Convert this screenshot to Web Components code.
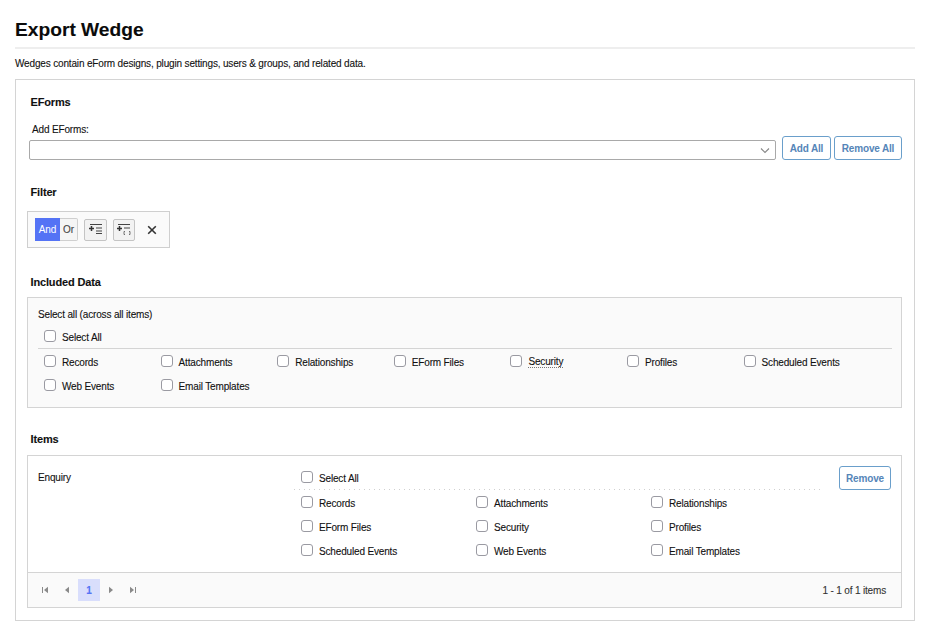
<!DOCTYPE html>
<html>
<head>
<meta charset="utf-8">
<title>Export Wedge</title>
<style>
  html, body { margin: 0; background: #fff; }
  body { font: 10px "Liberation Sans", Arial, sans-serif; letter-spacing: -0.16px; color: #111; -webkit-text-stroke: 0.1px currentColor; }
</style>
</head>
<body>
<wedge-page>
  <span slot="title">Export Wedge</span>
  <span slot="intro">Wedges contain eForm designs, plugin settings, users &amp; groups, and related data.</span>

  <section-title style="height:41px">EForms</section-title>
  <eform-picker></eform-picker>

  <section-title style="height:26px;margin-top:25px">Filter</section-title>
  <filter-bar></filter-bar>

  <section-title style="height:22px;margin-top:27px">Included Data</section-title>
  <included-data></included-data>

  <section-title style="height:23px;margin-top:24px">Items</section-title>
  <item-list></item-list>
</wedge-page>

<script>
// shared check list, same order everywhere
const DATA_TYPES = ['Records', 'Attachments', 'Relationships', 'EForm Files', 'Security', 'Profiles', 'Scheduled Events', 'Web Events', 'Email Templates'];

class WedgePage extends HTMLElement {
  constructor() {
    super();
    this.attachShadow({ mode: 'open' });
    this.shadowRoot.innerHTML = `
      <style>
        :host { display: block; width: 900px; padding: 0 15px; }
        h1 { margin: 0; height: 49px; box-sizing: border-box; padding-top: 18px; font: bold 19.2px/24px "Liberation Sans", Arial, sans-serif; letter-spacing: 0; color: #0b0b0b; border-bottom: 2px solid #eee; }
        p { margin: 0; height: 30px; box-sizing: border-box; padding-top: 8px; font-size: 10px; line-height: 13px; }
        .panel { box-sizing: border-box; height: 542px; border: 1px solid #d4d4d4; padding: 15px 12px 0 11px; }
      </style>
      <h1><slot name="title"></slot></h1>
      <p><slot name="intro"></slot></p>
      <div class="panel"><slot></slot></div>
    `;
  }
}

class SectionTitle extends HTMLElement {
  constructor() {
    super();
    this.attachShadow({ mode: 'open' });
    this.shadowRoot.innerHTML = `
      <style>
        :host { display: block; padding-left: 3.5px; font: bold 11px/14px "Liberation Sans", Arial, sans-serif; letter-spacing: -0.15px; color: #111; }
      </style>
      <slot></slot>
    `;
  }
}

class WedgeButton extends HTMLElement {
  constructor() {
    super();
    this.attachShadow({ mode: 'open' });
    this.shadowRoot.innerHTML = `
      <style>
        :host { display: inline-flex; box-sizing: border-box; height: 24px; align-items: center; justify-content: center; border: 1px solid #6a9fcb; border-radius: 3px; background: #fff; color: #5585b8; font: bold 10px "Liberation Sans", Arial, sans-serif; -webkit-text-stroke: 0; }
      </style>
      <slot></slot>
    `;
  }
}

class WedgeCheck extends HTMLElement {
  constructor() {
    super();
    this.attachShadow({ mode: 'open' });
    this.shadowRoot.innerHTML = `
      <style>
        :host { display: flex; align-items: center; gap: 6px; height: 24px; font-size: 10px; color: #111; }
        i { display: block; box-sizing: border-box; width: 12px; height: 12px; margin-top: -2px; border: 1px solid #9a9aa2; border-radius: 3px; background: #fff; }
        :host([hint]) span { border-bottom: 1px dotted #777; line-height: 11px; }
      </style>
      <i></i><span><slot></slot></span>
    `;
  }
}

class EformPicker extends HTMLElement {
  constructor() {
    super();
    this.attachShadow({ mode: 'open' });
    this.shadowRoot.innerHTML = `
      <style>
        :host { display: block; position: relative; height: 24px; }
        label { position: absolute; left: 5px; top: -13px; font-size: 10px; line-height: 13px; }
        .row { display: flex; align-items: flex-end; height: 24px; margin-left: 2px; }
        .combo { box-sizing: border-box; width: 747px; height: 20px; border: 1px solid #a9a9a9; border-radius: 2px; background: #fff; display: flex; align-items: center; justify-content: flex-end; padding-right: 4px; margin-right: 6px; }
        wedge-button.add { width: 49px; margin-right: 3px; }
        wedge-button.rem { width: 68px; }
      </style>
      <label>Add EForms:</label>
      <div class="row">
        <div class="combo">
          <svg width="12" height="12" viewBox="0 0 12 12"><path d="M2 4.5l4 4 4-4" fill="none" stroke="#888" stroke-width="1.1"/></svg>
        </div>
        <wedge-button class="add">Add All</wedge-button>
        <wedge-button class="rem">Remove All</wedge-button>
      </div>
    `;
  }
}

class FilterBar extends HTMLElement {
  constructor() {
    super();
    this.attachShadow({ mode: 'open' });
    this.shadowRoot.innerHTML = `
      <style>
        :host { display: flex; box-sizing: border-box; width: 143px; height: 37px; align-items: center; border: 1px solid #cfcfcf; padding: 0 5px 0 7px; background: #fafafa; font-size: 10px; }
        .and, .or { height: 23px; display: flex; align-items: center; justify-content: center; box-sizing: border-box; }
        .and { width: 25px; background: #5473f5; color: #fff; -webkit-text-stroke: 0; }
        .or { width: 18px; border: 1px solid #cfcfcf; border-left: 0; border-radius: 0 2px 2px 0; color: #444; background: #f5f5f5; margin-right: 6px; }
        .tool { box-sizing: border-box; width: 23px; height: 22px; border: 1px solid #c4c4c4; border-radius: 2px; background: #f2f2f2; display: flex; align-items: center; justify-content: center; margin-right: 6px; }
        .close { margin-left: 5px; width: 24px; display: flex; justify-content: center; }
      </style>
      <div class="and">And</div>
      <div class="or">Or</div>
      <div class="tool">
        <svg width="14" height="11" viewBox="0 0 14 11"><path d="M0 4.5h5M2.5 2v5" stroke="#333" stroke-width="1.5" fill="none"/><path d="M1 .5h12M7 4h6M7 7h6M7 9.5h6" stroke="#444" stroke-width="1" fill="none"/></svg>
      </div>
      <div class="tool" style="width:22px;margin-right:0">
        <svg width="14" height="11" viewBox="0 0 14 11"><path d="M0 4.5h5M2.5 2v5" stroke="#333" stroke-width="1.5" fill="none"/><path d="M1 .5h12M7 4h6" stroke="#444" stroke-width="1" fill="none"/><path d="M8 7.5H7v3h1M12 7.5h1v3h-1" stroke="#555" stroke-width=".8" fill="none"/></svg>
      </div>
      <div class="close">
        <svg width="10" height="10" viewBox="0 0 10 10"><path d="M1.2 1.2l7.6 7.6M8.8 1.2L1.2 8.8" stroke="#333" stroke-width="1.6"/></svg>
      </div>
    `;
  }
}

class IncludedData extends HTMLElement {
  constructor() {
    super();
    this.attachShadow({ mode: 'open' });
    const checks = DATA_TYPES.map(t => `<wedge-check${t === 'Security' ? ' hint' : ''}>${t}</wedge-check>`).join('');
    this.shadowRoot.innerHTML = `
      <style>
        :host { display: block; box-sizing: border-box; height: 111px; border: 1px solid #d4d4d4; background: #fafafa; padding: 10px 9px 0 10px; }
        .cap { height: 17px; line-height: 13px; }
        .all { height: 23px; border-bottom: 1px solid #d4d4d4; padding-left: 6px; box-sizing: content-box; }
        .grid { display: grid; grid-template-columns: repeat(7, 116.6px); grid-auto-rows: 24px; padding-left: 6px; margin-top: 1px; }
      </style>
      <div class="cap">Select all (across all items)</div>
      <div class="all"><wedge-check>Select All</wedge-check></div>
      <div class="grid">${checks}</div>
    `;
  }
}

class ItemList extends HTMLElement {
  constructor() {
    super();
    this.attachShadow({ mode: 'open' });
    const checks = DATA_TYPES.map(t => `<wedge-check>${t}</wedge-check>`).join('');
    this.shadowRoot.innerHTML = `
      <style>
        :host { display: block; box-sizing: border-box; height: 153px; border: 1px solid #d4d4d4; background: #fff; }
        .row { display: flex; height: 117px; box-sizing: border-box; padding: 10px 10px 0 10px; border-bottom: 1px solid #d4d4d4; }
        .name { width: 256px; padding-top: 5px; line-height: 13px; }
        .checks { width: 526px; }
        .all { height: 23px; padding-left: 7px; padding-bottom: 1px; background: repeating-linear-gradient(90deg, #cfcfcf 0 1px, transparent 1px 5px) left bottom / 100% 1px no-repeat; }
        .grid { display: grid; grid-template-columns: repeat(3, 175px); grid-auto-rows: 24px; padding-left: 7px; margin-top: 1px; }
        .act { margin-left: auto; }
        wedge-button { width: 52px; }
        item-pager { height: 34px; }
      </style>
      <div class="row">
        <div class="name">Enquiry</div>
        <div class="checks">
          <div class="all"><wedge-check>Select All</wedge-check></div>
          <div class="grid">${checks}</div>
        </div>
        <div class="act"><wedge-button>Remove</wedge-button></div>
      </div>
      <item-pager></item-pager>
    `;
  }
}

class ItemPager extends HTMLElement {
  constructor() {
    super();
    this.attachShadow({ mode: 'open' });
    this.shadowRoot.innerHTML = `
      <style>
        :host { display: flex; align-items: center; box-sizing: border-box; background: #fafafa; padding: 0 15px 0 6px; font-size: 10px; color: #333; }
        .nav { width: 22px; height: 22px; display: flex; align-items: center; justify-content: center; }
        .cur { background: #d9defc; color: #5473f5; font-weight: bold; }
        .info { margin-left: auto; }
      </style>
      <div class="nav"><svg width="8" height="8" viewBox="0 0 8 8"><path d="M1 1v6h1V1zM7 .8v6.4L3 4z" fill="#8a8a8a"/></svg></div>
      <div class="nav"><svg width="8" height="8" viewBox="0 0 8 8"><path d="M6 .8v6.4L2 4z" fill="#8a8a8a"/></svg></div>
      <div class="nav cur">1</div>
      <div class="nav"><svg width="8" height="8" viewBox="0 0 8 8"><path d="M2 .8v6.4L6 4z" fill="#8a8a8a"/></svg></div>
      <div class="nav"><svg width="8" height="8" viewBox="0 0 8 8"><path d="M7 1v6H6V1zM1 .8v6.4L5 4z" fill="#8a8a8a"/></svg></div>
      <div class="info">1 - 1 of 1 items</div>
    `;
  }
}

customElements.define('wedge-page', WedgePage);
customElements.define('section-title', SectionTitle);
customElements.define('wedge-button', WedgeButton);
customElements.define('wedge-check', WedgeCheck);
customElements.define('eform-picker', EformPicker);
customElements.define('filter-bar', FilterBar);
customElements.define('included-data', IncludedData);
customElements.define('item-list', ItemList);
customElements.define('item-pager', ItemPager);
</script>
</body>
</html>
